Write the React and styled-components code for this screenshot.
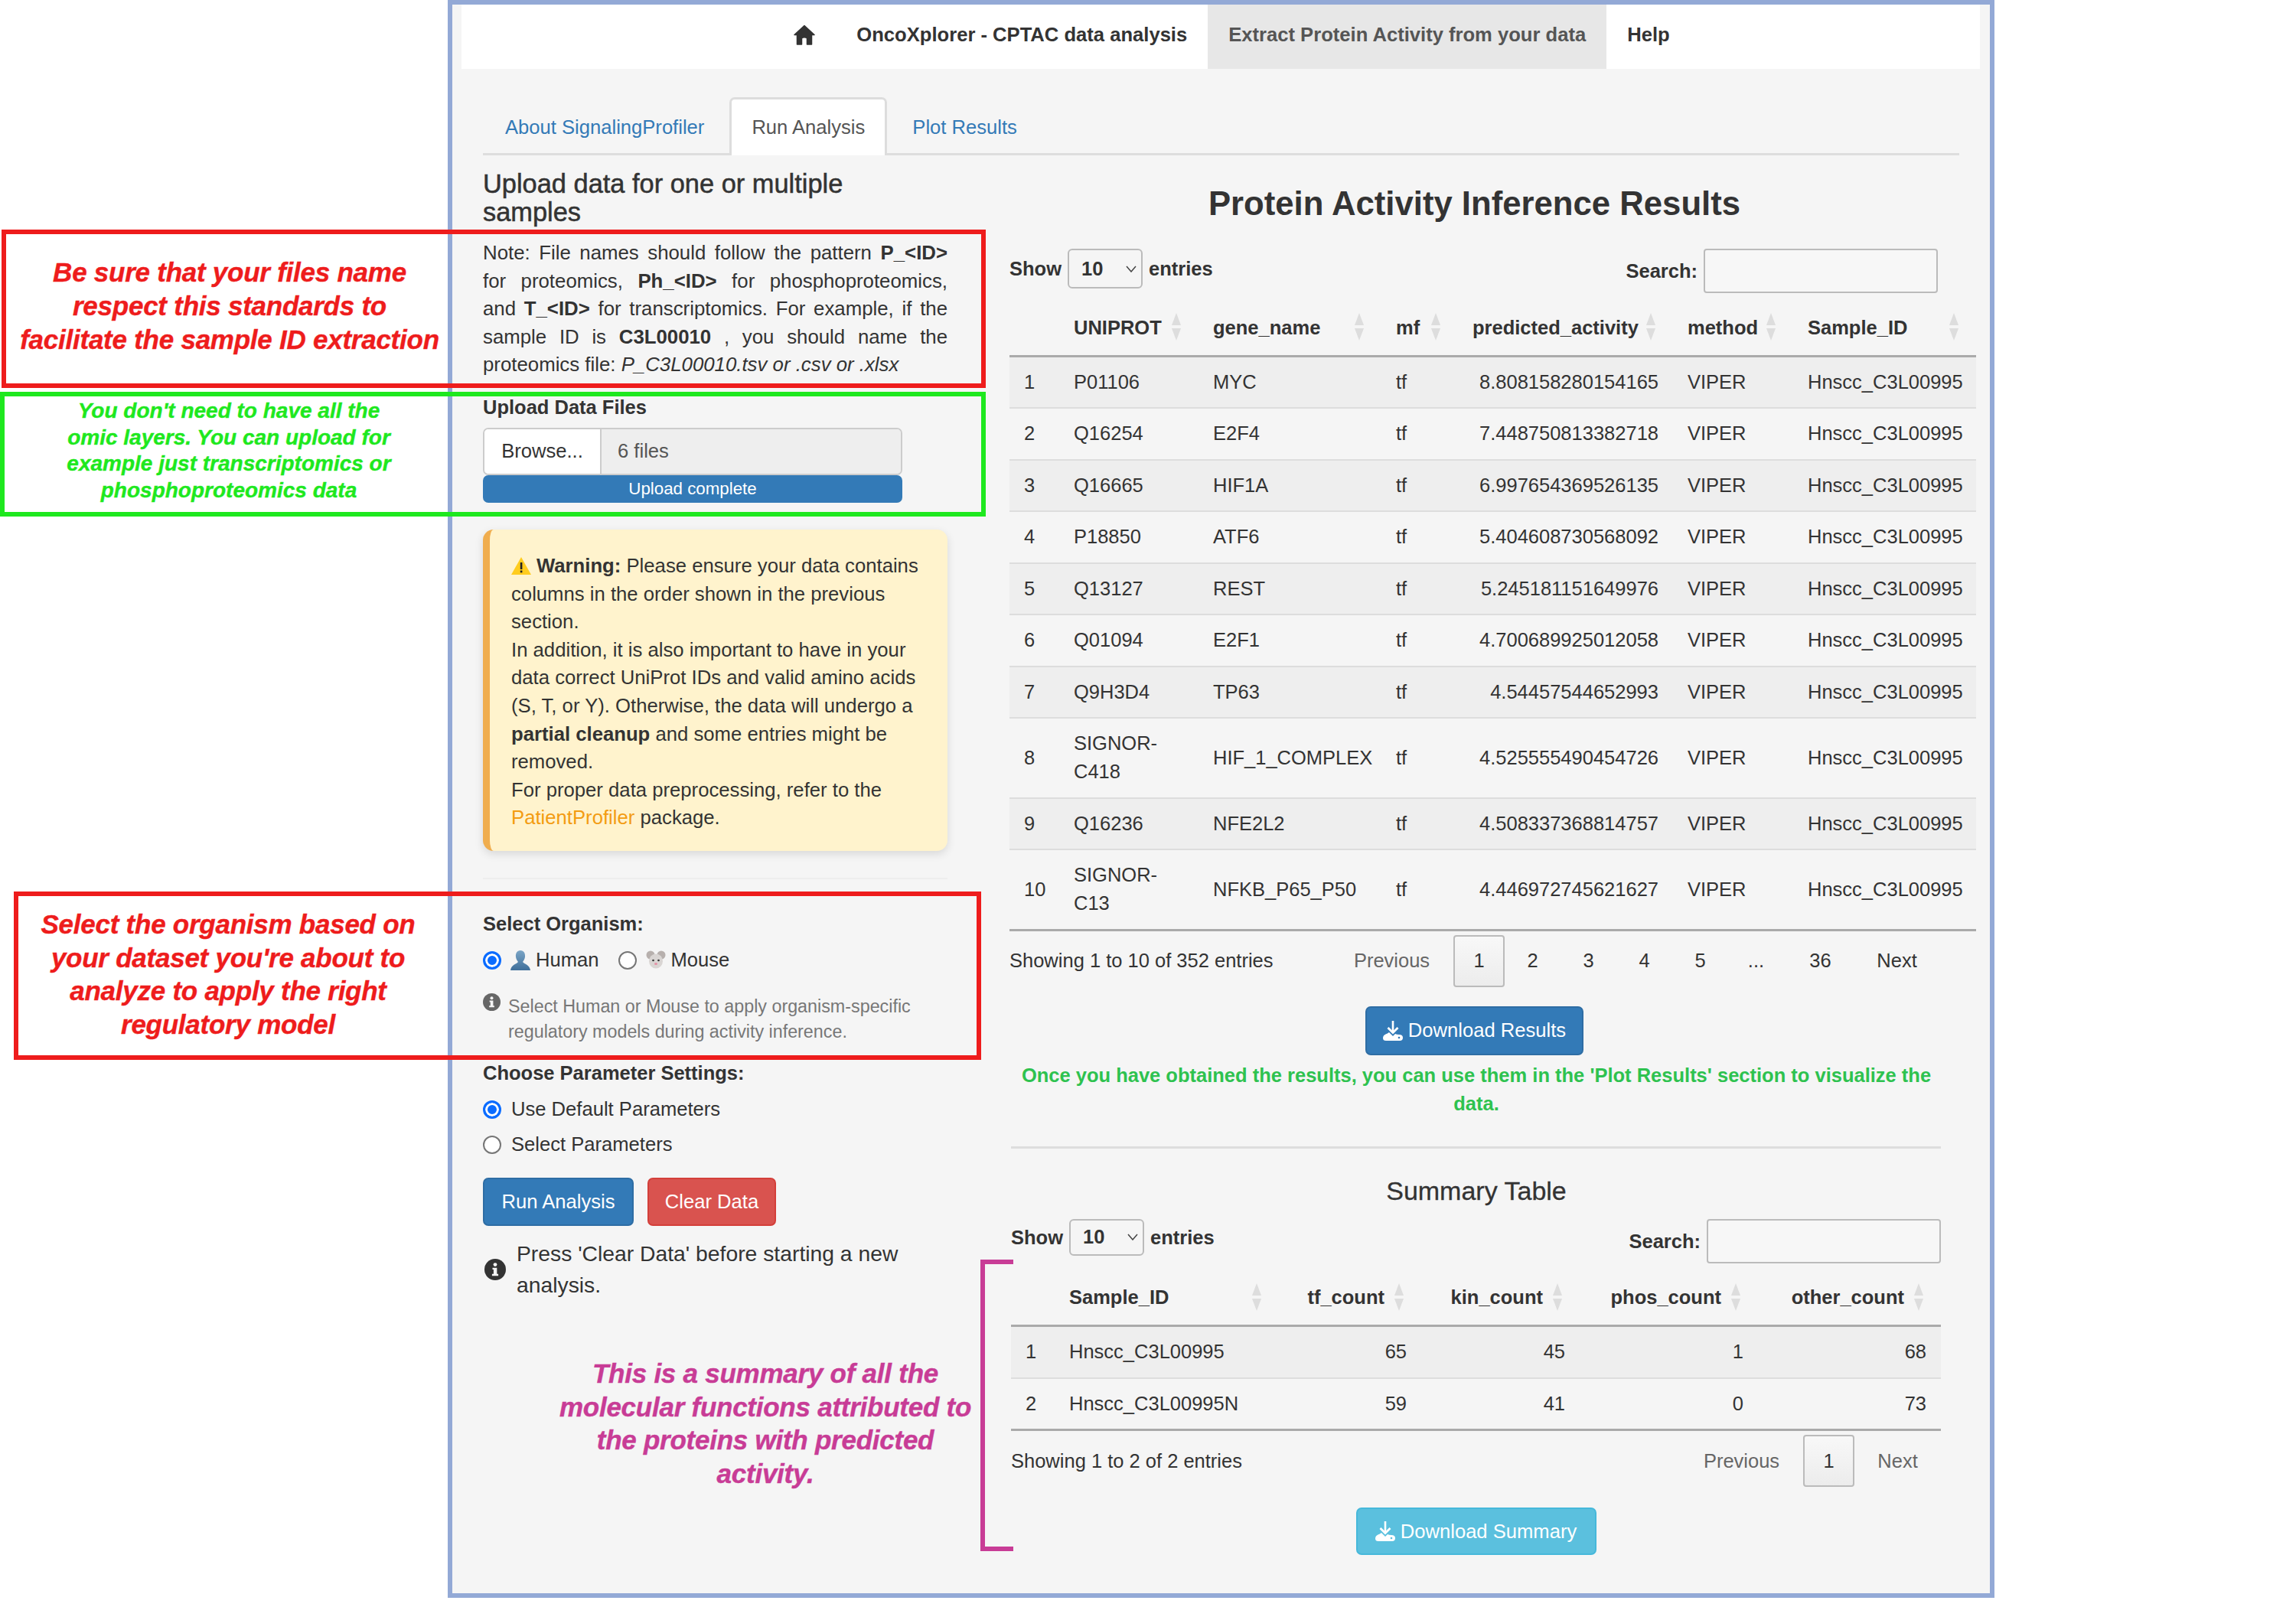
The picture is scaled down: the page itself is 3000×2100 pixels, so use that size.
import React from "react";
import styled, { createGlobalStyle } from "styled-components";

const Global = createGlobalStyle`
  html, body { margin: 0; padding: 0; background: #fff; }
  body { font-family: "Liberation Sans", Arial, sans-serif; color: #333; }
  * { box-sizing: border-box; }
`;

const Page = styled.div`
  position: relative;
  width: 3000px;
  height: 2100px;
  background: #fff;
  padding-left: 585px;
`;

const Frame = styled.div`
  width: 2021px;
  height: 2088px;
  border: 6px solid #93a9d6;
  background: #f5f5f5;
  padding: 0 13px 0 12px;
`;

const Navbar = styled.nav`
  height: 84px;
  background: #fff;
  display: flex;
  justify-content: center;
  align-items: stretch;
  padding-left: 29px;
`;

const NavItem = styled.a`
  display: flex;
  align-items: center;
  padding: 0 27px 6px;
  font-size: 25.6px;
  font-weight: 700;
  background: ${(p) => (p.$active ? "#e7e7e7" : "transparent")};
  color: ${(p) => (p.$active ? "#555" : "#333")};
`;

const Content = styled.div`
  padding: 37px 0 0 28px;
`;

const Tabs = styled.div`
  height: 76px;
  width: 1929px;
  border-bottom: 3px solid #ddd;
  display: flex;
  align-items: stretch;
`;

const Tab = styled.a`
  height: 76px;
  padding: 0 26px;
  display: flex;
  align-items: center;
  font-size: 25.6px;
  color: ${(p) => (p.$active ? "#555" : "#337ab7")};
  background: ${(p) => (p.$active ? "#fff" : "transparent")};
  border: 3px solid ${(p) => (p.$active ? "#ddd" : "transparent")};
  border-bottom: 0;
  border-radius: 7px 7px 0 0;
  margin-right: 4px;
`;

const Columns = styled.div`
  display: grid;
  grid-template-columns: 607px 1263px;
  column-gap: 81px;
`;

const Left = styled.div`
  display: flex;
  flex-direction: column;
`;

const Right = styled.div`
  display: flex;
  flex-direction: column;
`;

const SectionTitle = styled.h4`
  margin: 19px 0 16px;
  font-size: 34.4px;
  line-height: 37px;
  font-weight: 500;
  color: #333;
  -webkit-text-stroke: 0.5px #333;
`;

const Note = styled.p`
  margin: 0;
  font-size: 25.8px;
  line-height: 36.6px;
  text-align: justify;
`;

const FieldLabel = styled.label`
  display: block;
  font-size: 25.5px;
  line-height: 32px;
  font-weight: 700;
  margin-top: ${(p) => p.$top || 0}px;
`;

const FileRow = styled.div`
  margin-top: 11px;
  width: 548px;
  height: 62px;
  display: flex;
  border: 2px solid #ccc;
  border-radius: 7px;
  overflow: hidden;
  font-size: 25.6px;
`;

const Browse = styled.div`
  width: 153px;
  background: #fff;
  border-right: 2px solid #ccc;
  display: flex;
  align-items: center;
  justify-content: center;
`;

const FileName = styled.div`
  flex: 1;
  background: #eee;
  color: #555;
  display: flex;
  align-items: center;
  padding-left: 21px;
`;

const Progress = styled.div`
  width: 548px;
  height: 36px;
  background: #337ab7;
  border-radius: 7px;
  color: #fff;
  font-size: 22.3px;
  display: flex;
  align-items: center;
  justify-content: center;
`;

const WarningCard = styled.div`
  margin-top: 35px;
  height: 420px;
  padding: 29px 28px 0 28px;
  background: #fff3cd;
  border-left: 9px solid #f0ad4e;
  border-radius: 14px;
  box-shadow: 0 4px 12px rgba(0, 0, 0, 0.12);
  font-size: 25.7px;
  line-height: 36.6px;
`;

const WarnLink = styled.a`
  color: #f39c12;
`;

const InlineIcon = styled.svg`
  vertical-align: -3px;
  margin-right: ${(p) => p.$right}px;
  margin-left: ${(p) => p.$left || 0}px;
  flex: none;
`;

const Rule = styled.hr`
  margin: 35px 0 0;
  border: 0;
  border-top: 2px solid #eee;
`;

const RadioRow = styled.div`
  display: flex;
  align-items: center;
  font-size: 25.6px;
  height: 46px;
  margin-top: ${(p) => p.$top || 0}px;
`;

const Radio = styled.span`
  width: 24px;
  height: 24px;
  border-radius: 50%;
  flex: none;
  background: ${(p) => (p.$on ? "#0b6cff" : "#fff")};
  border: ${(p) => (p.$on ? "3px solid #0b6cff" : "2px solid #767676")};
  box-shadow: ${(p) => (p.$on ? "inset 0 0 0 3px #fff" : "none")};
  margin-right: ${(p) => p.$right}px;
`;

const RadioText = styled.span`
  margin-right: ${(p) => p.$right || 0}px;
`;

const Help = styled.div`
  display: flex;
  margin-top: 20px;
  color: #777;
  font-size: 23.3px;
  line-height: 33px;
`;

const HelpText = styled.div`
  margin-left: 10px;
  padding-top: 1px;
`;

const ButtonRow = styled.div`
  display: flex;
  gap: 18px;
  margin-top: 20px;
`;

const Button = styled.button`
  height: ${(p) => p.$h || 63}px;
  width: ${(p) => p.$w}px;
  padding: 0;
  border: 2px solid ${(p) => p.$border};
  border-radius: 7px;
  background: ${(p) => p.$bg};
  color: #fff;
  font: 25.6px "Liberation Sans", Arial, sans-serif;
  display: flex;
  align-items: center;
  justify-content: center;
`;

const Press = styled.div`
  display: flex;
  align-items: center;
  margin-top: 16px;
  font-size: 28.3px;
  line-height: 41px;
`;

const PressText = styled.div`
  margin-left: 14px;
  width: 540px;
`;

const MainTitle = styled.h2`
  margin: 38px 0 0;
  height: 50px;
  font-size: 43.7px;
  line-height: 50px;
  font-weight: 700;
  text-align: center;
  color: #333;
  padding-right: 48px;
`;

const TableControls = styled.div`
  display: flex;
  justify-content: space-between;
  align-items: flex-start;
  width: ${(p) => p.$w}px;
  margin-top: ${(p) => p.$top}px;
  font-size: 25.5px;
  font-weight: 700;
`;

const ControlGroup = styled.div`
  display: flex;
  align-items: flex-start;
  gap: 8px;
`;

const ControlText = styled.span`
  line-height: ${(p) => p.$lh}px;
`;

const SelectBox = styled.div`
  width: 98px;
  height: ${(p) => p.$h}px;
  border: 2px solid #bbb;
  border-radius: 6px;
  display: flex;
  align-items: center;
  justify-content: space-between;
  padding: 0 6px 0 16px;
`;

const SearchBox = styled.div`
  width: 306px;
  height: ${(p) => p.$h}px;
  border: 2px solid #bbb;
  border-radius: 4px;
  background: #f7f7f7;
`;

const Table = styled.table`
  border-collapse: collapse;
  table-layout: fixed;
  width: ${(p) => p.$w}px;
  margin-top: 8px;
  font-size: 25.5px;
`;

const HeadCell = styled.th`
  position: relative;
  height: 74px;
  padding: ${(p) => (p.$right ? "2px 48px 0 0" : "2px 19px 0")};
  text-align: ${(p) => (p.$right ? "right" : "left")};
  font-weight: 700;
  border-bottom: 3px solid #aaa;
  white-space: nowrap;
`;

const SortIcon = styled.svg`
  position: absolute;
  right: 22px;
  top: 50%;
  margin-top: -20px;
`;

const Row = styled.tr`
  background: ${(p) => (p.$odd ? "#eee" : "transparent")};
`;

const Cell = styled.td`
  height: 67.2px;
  padding: 14.25px 19px;
  line-height: 37px;
  text-align: ${(p) => (p.$right ? "right" : "left")};
  border-bottom: ${(p) => (p.$last ? "3px solid #aaa" : "2px solid #ddd")};
`;

const Footer = styled.div`
  display: flex;
  justify-content: space-between;
  align-items: center;
  width: ${(p) => p.$w}px;
  height: 68px;
  margin-top: 5px;
  font-size: 25.5px;
`;

const Pager = styled.div`
  display: flex;
  align-items: center;
  height: 68px;
  padding-right: ${(p) => p.$pad}px;
`;

const PageItem = styled.span`
  display: flex;
  align-items: center;
  justify-content: center;
  height: 68px;
  width: ${(p) => p.$w || 73}px;
  color: ${(p) => (p.$muted ? "#666" : "#333")};
  ${(p) => p.$current && "border: 2px solid #bbb; border-radius: 4px; background: linear-gradient(#f8f8f8, #ececec);"}
`;

const Centered = styled.div`
  display: flex;
  justify-content: center;
  width: ${(p) => p.$w}px;
  margin-top: ${(p) => p.$top}px;
`;

const GreenNote = styled.p`
  margin: 8px 0 0;
  width: 1220px;
  font-size: 25.5px;
  line-height: 37px;
  font-weight: 700;
  color: #2ec24f;
  text-align: center;
`;

const Divider = styled.hr`
  margin: 37px 0 0 2px;
  width: 1215px;
  border: 0;
  border-top: 3px solid #ddd;
`;

const SummaryTitle = styled.h3`
  margin: 35px 0 0;
  width: 1220px;
  font-size: 34px;
  line-height: 40px;
  font-weight: 500;
  text-align: center;
  color: #333;
  -webkit-text-stroke: 0.3px #333;
`;

const SummaryWrap = styled.div`
  margin-left: 2px;
`;

/* annotations lying over the page */
const AnnotationBox = styled.div`
  position: absolute;
  left: ${(p) => p.$x}px;
  top: ${(p) => p.$y}px;
  width: ${(p) => p.$w}px;
  height: ${(p) => p.$h}px;
  border: 6px solid ${(p) => p.$c};
  pointer-events: none;
`;

const AnnotationText = styled.div`
  position: absolute;
  left: ${(p) => p.$x}px;
  top: ${(p) => p.$y}px;
  width: ${(p) => p.$w}px;
  color: ${(p) => p.$c};
  font-size: ${(p) => p.$fs}px;
  line-height: ${(p) => p.$lh}px;
  letter-spacing: ${(p) => p.$ls || 0}px;
  font-weight: 700;
  font-style: italic;
  text-align: center;
  white-space: nowrap;
  -webkit-text-stroke: 0.4px ${(p) => p.$c};
`;

const Bracket = styled.div`
  position: absolute;
  left: 1281px;
  top: 1646px;
  width: 43px;
  height: 381px;
  border: 6px solid #c83c96;
  border-right: 0;
`;

const HomeIcon = () => (
  <svg width="28" height="27" viewBox="0 0 28 27" aria-hidden="true">
    <path
      fill="#333"
      stroke="#333"
      strokeWidth="1.5"
      strokeLinejoin="round"
      d="M14 1.5 L27 13.5 L23.5 13.5 L23.5 26 L17.5 26 L17.5 18 Q14 15.5 10.5 18 L10.5 26 L4.5 26 L4.5 13.5 L1 13.5 Z"
    />
  </svg>
);

const WarnIcon = () => (
  <InlineIcon width="26" height="23" viewBox="0 0 26 23" $right={7} aria-hidden="true">
    <path fill="#ffcc1e" d="M13 0 L26 23 L0 23 Z" />
    <rect x="11.8" y="7" width="2.6" height="9" fill="#222" />
    <rect x="11.8" y="17.5" width="2.6" height="2.8" fill="#222" />
  </InlineIcon>
);

const PersonIcon = () => (
  <InlineIcon width="26" height="26" viewBox="0 0 26 26" $right={7} aria-hidden="true">
    <defs>
      <linearGradient id="bust" x1="0" y1="0" x2="0" y2="1">
        <stop offset="0" stopColor="#7ba5c6" />
        <stop offset="1" stopColor="#3f6f9a" />
      </linearGradient>
    </defs>
    <path
      fill="url(#bust)"
      d="M13 0 C17.5 0 19.5 4 19 8.5 C18.6 11.5 17.2 13.6 16 15 C18 18 25 18.5 26 26 L0 26 C1 18.5 8 18 10 15 C8.8 13.6 7.4 11.5 7 8.5 C6.5 4 8.5 0 13 0 Z"
    />
  </InlineIcon>
);

const MouseIcon = () => (
  <InlineIcon width="26" height="26" viewBox="0 0 26 26" $right={7} aria-hidden="true">
    <circle cx="6" cy="6" r="5.5" fill="#b7b0ad" />
    <circle cx="20" cy="6" r="5.5" fill="#b7b0ad" />
    <ellipse cx="13" cy="14" rx="9" ry="9.5" fill="#d9d5d3" />
    <circle cx="9.5" cy="13" r="1.3" fill="#333" />
    <circle cx="16.5" cy="13" r="1.3" fill="#333" />
    <ellipse cx="13" cy="17.5" rx="2" ry="1.5" fill="#e58fa5" />
  </InlineIcon>
);

const InfoIcon = ({ size, color, left }) => (
  <InlineIcon width={size} height={size} viewBox="0 0 24 24" $right={0} $left={left} aria-hidden="true">
    <circle cx="12" cy="12" r="12" fill={color} />
    <circle cx="12" cy="6.5" r="2.1" fill="#f5f5f5" />
    <path fill="#f5f5f5" d="M9 10 H14 V17 H15.5 V19 H8.5 V17 H10.2 V12 H9 Z" />
  </InlineIcon>
);

const DownloadIcon = ({ dot }) => (
  <InlineIcon width="26" height="26" viewBox="0 0 26 26" $right={7} aria-hidden="true">
    <path d="M13 0 V14" fill="none" stroke="#fff" strokeWidth="2.6" />
    <path d="M6.5 9 L13 15.5 L19.5 9" fill="none" stroke="#fff" strokeWidth="2.8" />
    <path
      fill="#fff"
      d="M8 15 L13 20 L16 17 Q18 18 21 18 Q26 18 26 22 Q26 26 22 26 H4 Q0 26 0 22.5 Q0 19 3.5 17.5 Q6 16.5 8 15 Z"
    />
    <circle cx="21" cy="22" r="1.3" fill={dot} />
  </InlineIcon>
);

const Chevron = () => (
  <svg width="14" height="9" viewBox="0 0 14 9" aria-hidden="true">
    <path d="M1 1 L7 8 L13 1" fill="none" stroke="#444" strokeWidth="1.5" />
  </svg>
);

const Sort = () => (
  <SortIcon width="14" height="40" viewBox="0 0 14 40" aria-hidden="true">
    <path fill="#ddd" d="M7 2 L13 18 H1 Z M1 22 H13 L7 38 Z" />
  </SortIcon>
);

const resultCols = [65, 182, 239, 100, 281, 157, 239];
const resultHead = ["", "UNIPROT", "gene_name", "mf", "predicted_activity", "method", "Sample_ID"];
const resultRows = [
  ["P01106", "MYC", "8.808158280154165"],
  ["Q16254", "E2F4", "7.448750813382718"],
  ["Q16665", "HIF1A", "6.997654369526135"],
  ["P18850", "ATF6", "5.404608730568092"],
  ["Q13127", "REST", "5.245181151649976"],
  ["Q01094", "E2F1", "4.700689925012058"],
  ["Q9H3D4", "TP63", "4.54457544652993"],
  ["SIGNOR-C418", "HIF_1_COMPLEX", "4.525555490454726"],
  ["Q16236", "NFE2L2", "4.508337368814757"],
  ["SIGNOR-C13", "NFKB_P65_P50", "4.446972745621627"],
];

const summaryCols = [57, 293, 186, 207, 233, 239];
const summaryHead = ["", "Sample_ID", "tf_count", "kin_count", "phos_count", "other_count"];
const summaryRows = [
  ["Hnscc_C3L00995", 65, 45, 1, 68],
  ["Hnscc_C3L00995N", 59, 41, 0, 73],
];

const Controls = ({ w, top, selectH, searchH, lh }) => (
  <TableControls $w={w} $top={top}>
    <ControlGroup>
      <ControlText $lh={lh}>Show</ControlText>
      <SelectBox $h={selectH}>
        10 <Chevron />
      </SelectBox>
      <ControlText $lh={lh}>entries</ControlText>
    </ControlGroup>
    <ControlGroup>
      <ControlText $lh={searchH}>Search:</ControlText>
      <SearchBox $h={searchH} />
    </ControlGroup>
  </TableControls>
);

export default function App() {
  return (
    <Page>
      <Global />
      <Frame>
        <Navbar>
          <NavItem><HomeIcon /></NavItem>
          <NavItem>OncoXplorer - CPTAC data analysis</NavItem>
          <NavItem $active>Extract Protein Activity from your data</NavItem>
          <NavItem>Help</NavItem>
        </Navbar>
        <Content>
          <Tabs>
            <Tab>About SignalingProfiler</Tab>
            <Tab $active>Run Analysis</Tab>
            <Tab>Plot Results</Tab>
          </Tabs>
          <Columns>
            <Left>
              <SectionTitle>Upload data for one or multiple samples</SectionTitle>
              <Note>
                Note: File names should follow the pattern <b>P_&lt;ID&gt;</b> for proteomics, <b>Ph_&lt;ID&gt;</b> for
                phosphoproteomics, and <b>T_&lt;ID&gt;</b> for transcriptomics. For example, if the sample ID is{" "}
                <b>C3L00010</b> , you should name the proteomics file: <i>P_C3L00010.tsv or .csv or .xlsx</i>
              </Note>
              <FieldLabel $top={21}>Upload Data Files</FieldLabel>
              <FileRow>
                <Browse>Browse...</Browse>
                <FileName>6 files</FileName>
              </FileRow>
              <Progress>Upload complete</Progress>
              <WarningCard>
                <WarnIcon />
                <b>Warning:</b> Please ensure your data contains columns in the order shown in the previous section.
                <br />
                In addition, it is also important to have in your data correct UniProt IDs and valid amino acids (S, T,
                or Y). Otherwise, the data will undergo a <b>partial cleanup</b> and some entries might be removed.
                <br />
                For proper data preprocessing, refer to the <WarnLink>PatientProfiler</WarnLink> package.
              </WarningCard>
              <Rule />
              <FieldLabel $top={42}>Select Organism:</FieldLabel>
              <RadioRow $top={9}>
                <Radio $on $right={12} />
                <PersonIcon />
                <RadioText $right={25}>Human</RadioText>
                <Radio $right={12} />
                <MouseIcon />
                <RadioText>Mouse</RadioText>
              </RadioRow>
              <Help>
                <InfoIcon size={23} color="#666" />
                <HelpText>
                  Select Human or Mouse to apply organism-specific
                  <br />
                  regulatory models during activity inference.
                </HelpText>
              </Help>
              <FieldLabel $top={21}>Choose Parameter Settings:</FieldLabel>
              <RadioRow $top={9}>
                <Radio $on $right={13} />
                <RadioText>Use Default Parameters</RadioText>
              </RadioRow>
              <RadioRow>
                <Radio $right={13} />
                <RadioText>Select Parameters</RadioText>
              </RadioRow>
              <ButtonRow>
                <Button $w={197} $bg="#337ab7" $border="#2e6da4">Run Analysis</Button>
                <Button $w={168} $bg="#d9534f" $border="#d43f3a">Clear Data</Button>
              </ButtonRow>
              <Press>
                <InfoIcon size={28} color="#333" left={2} />
                <PressText>Press 'Clear Data' before starting a new analysis.</PressText>
              </Press>
            </Left>
            <Right>
              <MainTitle>Protein Activity Inference Results</MainTitle>
              <Controls w={1213} top={34} selectH={52} searchH={58} lh={52} />
              <Table $w={1263}>
                <colgroup>
                  {resultCols.map((w, i) => (
                    <col key={i} width={w} />
                  ))}
                </colgroup>
                <thead>
                  <tr>
                    {resultHead.map((h, i) => (
                      <HeadCell key={i}>
                        {h}
                        {i > 0 && <Sort />}
                      </HeadCell>
                    ))}
                  </tr>
                </thead>
                <tbody>
                  {resultRows.map((r, i) => (
                    <Row key={i} $odd={i % 2 === 0}>
                      <Cell $last={i === 9}>{i + 1}</Cell>
                      <Cell $last={i === 9}>{r[0]}</Cell>
                      <Cell $last={i === 9}>{r[1]}</Cell>
                      <Cell $last={i === 9}>tf</Cell>
                      <Cell $last={i === 9} $right>{r[2]}</Cell>
                      <Cell $last={i === 9}>VIPER</Cell>
                      <Cell $last={i === 9}>Hnscc_C3L00995</Cell>
                    </Row>
                  ))}
                </tbody>
              </Table>
              <Footer $w={1263}>
                <span>Showing 1 to 10 of 352 entries</span>
                <Pager $pad={51}>
                  <PageItem $muted $w={161}>Previous</PageItem>
                  <PageItem $current $w={67}>1</PageItem>
                  <PageItem>2</PageItem>
                  <PageItem>3</PageItem>
                  <PageItem>4</PageItem>
                  <PageItem>5</PageItem>
                  <PageItem>...</PageItem>
                  <PageItem $w={95}>36</PageItem>
                  <PageItem $w={105}>Next</PageItem>
                </Pager>
              </Footer>
              <Centered $w={1215} $top={25}>
                <Button $w={285} $h={64} $bg="#337ab7" $border="#2e6da4"><DownloadIcon dot="#337ab7" />Download Results</Button>
              </Centered>
              <GreenNote>
                Once you have obtained the results, you can use them in the 'Plot Results' section to visualize the data.
              </GreenNote>
              <Divider />
              <SummaryTitle>Summary Table</SummaryTitle>
              <SummaryWrap>
                <Controls w={1215} top={17} selectH={48} searchH={58} lh={48} />
                <Table $w={1215}>
                  <colgroup>
                    {summaryCols.map((w, i) => (
                      <col key={i} width={w} />
                    ))}
                  </colgroup>
                  <thead>
                    <tr>
                      {summaryHead.map((h, i) => (
                        <HeadCell key={i} $right={i > 1}>
                          {h}
                          {i > 0 && <Sort />}
                        </HeadCell>
                      ))}
                    </tr>
                  </thead>
                  <tbody>
                    {summaryRows.map((r, i) => (
                      <Row key={i} $odd={i === 0}>
                        <Cell $last={i === 1}>{i + 1}</Cell>
                        <Cell $last={i === 1}>{r[0]}</Cell>
                        <Cell $last={i === 1} $right>{r[1]}</Cell>
                        <Cell $last={i === 1} $right>{r[2]}</Cell>
                        <Cell $last={i === 1} $right>{r[3]}</Cell>
                        <Cell $last={i === 1} $right>{r[4]}</Cell>
                      </Row>
                    ))}
                  </tbody>
                </Table>
                <Footer $w={1215}>
                  <span>Showing 1 to 2 of 2 entries</span>
                  <Pager $pad={0}>
                    <PageItem $muted $w={161}>Previous</PageItem>
                    <PageItem $current $w={67}>1</PageItem>
                    <PageItem $muted $w={113}>Next</PageItem>
                  </Pager>
                </Footer>
                <Centered $w={1215} $top={27}>
                  <Button $w={314} $h={62} $bg="#5bc0de" $border="#46b8da"><DownloadIcon dot="#5bc0de" />Download Summary</Button>
                </Centered>
              </SummaryWrap>
            </Right>
          </Columns>
        </Content>
      </Frame>

      <AnnotationBox $x={2} $y={300} $w={1286} $h={207} $c="#ee1c1c" />
      <AnnotationBox $x={0} $y={512} $w={1288} $h={163} $c="#1ee81e" />
      <AnnotationBox $x={18} $y={1165} $w={1264} $h={220} $c="#ee1c1c" />
      <Bracket />

      <AnnotationText $x={2} $y={334} $w={596} $c="#ee1c1c" $fs={35} $lh={44} $ls={-0.25}>
        Be sure that your files name
        <br />
        respect this standards to
        <br />
        facilitate the sample ID extraction
      </AnnotationText>
      <AnnotationText $x={1} $y={520} $w={596} $c="#1ee81e" $fs={28} $lh={34.5}>
        You don't need to have all the
        <br />
        omic layers. You can upload for
        <br />
        example just transcriptomics or
        <br />
        phosphoproteomics data
      </AnnotationText>
      <AnnotationText $x={0} $y={1186} $w={596} $c="#ee1c1c" $fs={35} $lh={43.5} $ls={-0.25}>
        Select the organism based on
        <br />
        your dataset you're about to
        <br />
        analyze to apply the right
        <br />
        regulatory model
      </AnnotationText>
      <AnnotationText $x={700} $y={1773} $w={600} $c="#c83c96" $fs={35} $lh={43.5} $ls={-0.25}>
        This is a summary of all the
        <br />
        molecular functions attributed to
        <br />
        the proteins with predicted
        <br />
        activity.
      </AnnotationText>
    </Page>
  );
}
